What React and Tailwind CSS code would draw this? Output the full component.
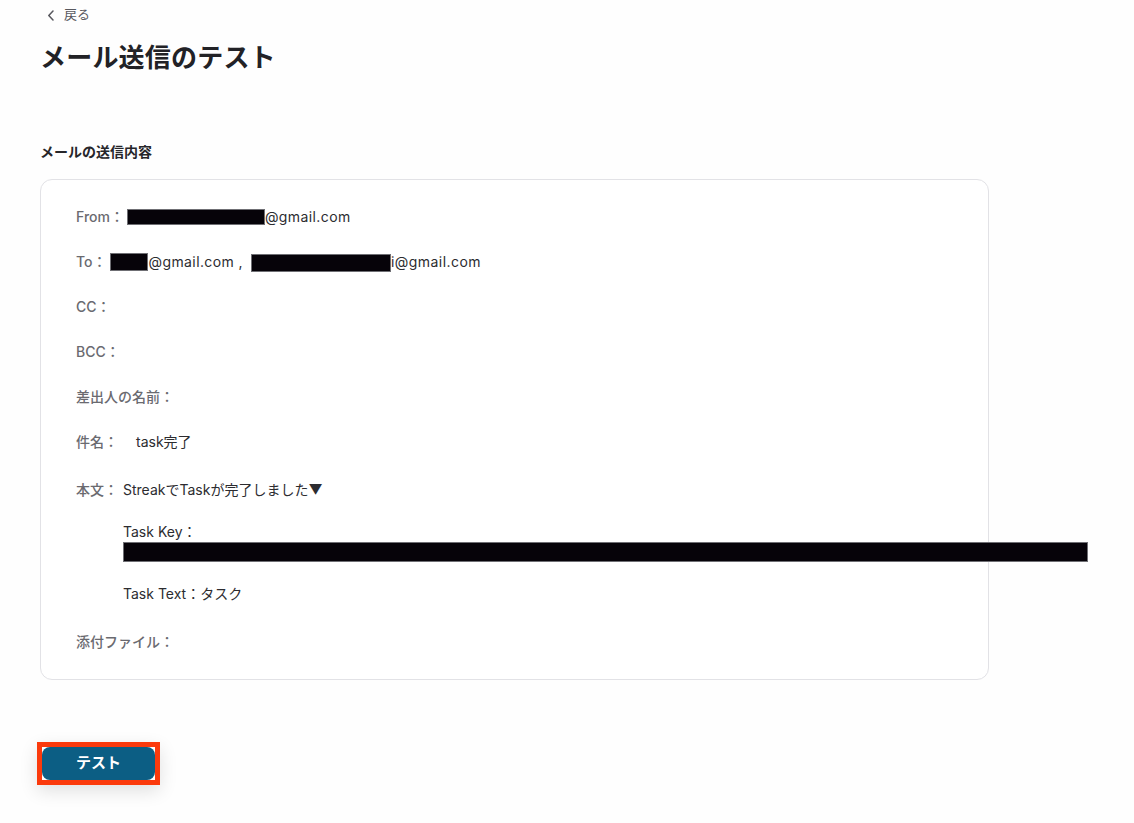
import { useState } from "react";

const Bar = ({ w, h = "h-[16px]" }) => (
  <span className={`inline-block align-middle bg-[#060309] border border-[#6f6f74] ${w} ${h}`} />
);

const Row = ({ label, children, gap = "ml-[3px]" }) => (
  <div className="flex items-start leading-[21px] h-[21px]">
    <span className="text-[14px] text-[#6a6a70] font-medium whitespace-nowrap">{label}</span>
    <div className={`flex items-center text-[14px] text-[#2c2c30] whitespace-nowrap ${gap}`}>{children}</div>
  </div>
);

const App = () => {
  const [sent, setsent] = useState(false);
  return (
    <div
      className="min-h-screen bg-[#fefefe] pl-[40px] pt-[5px] pb-[40px]"
      style={{ fontFamily: '"Inter", "Noto Sans CJK JP", sans-serif' }}
    >
      {/* back link */}
      <div className="flex items-center gap-[9px] h-[20px] pl-[7px] text-[13px] text-[#58585e]">
        <svg width="8" height="11" viewBox="0 0 8 11" fill="none">
          <path d="M6 1 L1.8 5.5 L6 10" stroke="#58585e" strokeWidth="1.5" strokeLinecap="round" strokeLinejoin="round" />
        </svg>
        <span>戻る</span>
      </div>

      <h1 className="mt-[15px] text-[26px] leading-[36px] font-bold text-[#222226] tracking-[0.2px]">メール送信のテスト</h1>

      <div className="mt-[66px] text-[14px] leading-[20px] font-bold text-[#26262a]">メールの送信内容</div>

      {/* mail content card */}
      <div className="mt-[17px] w-[949px] h-[501px] border border-[#e2e2e6] rounded-[12px] bg-white px-[35px] pt-[26px] flex flex-col gap-[24px]">
        <Row label="From：">
          <Bar w="w-[138px]" h="h-[16px]" />
          <span className="tracking-[0.4px]">@gmail.com</span>
        </Row>
        <Row label="To：">
          <Bar w="w-[38px]" h="h-[18px]" />
          <span className="ml-[1px] tracking-[0.4px]">@gmail.com ,</span>
          <span className="ml-[8px]"><Bar w="w-[140px]" h="h-[18px]" /></span>
          <span className="tracking-[0.45px]">i@gmail.com</span>
        </Row>
        <Row label="CC：" />
        <Row label="BCC：" />
        <Row label="差出人の名前：" />
        <Row label="件名：" gap="ml-[18px]">
          <span>task完了</span>
        </Row>
        <div className="flex items-start py-[3px] leading-[21px]">
          <span className="text-[14px] text-[#6a6a70] font-medium whitespace-nowrap">本文：</span>
          <div className="ml-[5px] flex flex-col text-[14px] text-[#2c2c30] whitespace-nowrap">
            <span className="h-[21px]">StreakでTaskが完了しました▼</span>
            <span className="h-[21px]" />
            <span className="h-[20px]">Task Key：</span>
            <div className="h-[22px] flex items-center">
              <span className="inline-block w-[965px] h-[20px] bg-[#060309] border border-[#6f6f74]" />
            </div>
            <span className="h-[20px]" />
            <span className="h-[21px]">Task Text：タスク</span>
          </div>
        </div>
        <Row label="添付ファイル：" />
      </div>

      {/* test button */}
      <div className="mt-[62px] -ml-[3px] inline-block border-[5px] border-[#fb3a0c] shadow-[0_6px_18px_rgba(0,0,0,0.12)]">
        <button
          onClick={() => setsent(!sent)}
          className="block w-[113px] h-[33px] rounded-[8px] bg-[#0c5e84] text-white text-[15px] font-bold"
        >
          テスト
        </button>
      </div>
    </div>
  );
};

export default App;
